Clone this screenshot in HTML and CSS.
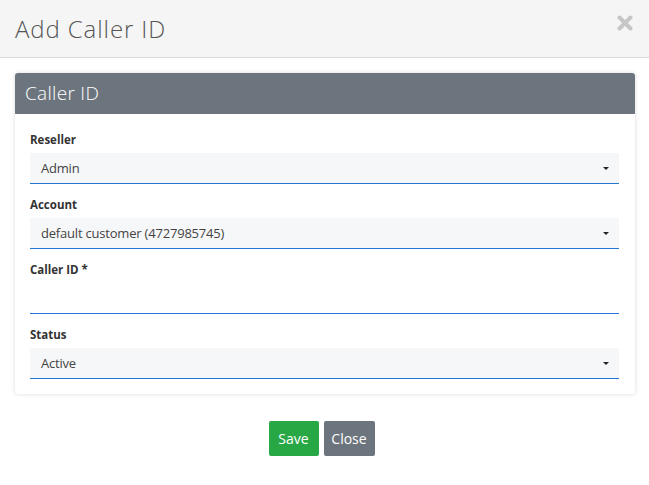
FILE: index.html
```html
<!DOCTYPE html>
<html>
<head>
<meta charset="utf-8">
<link rel="stylesheet" href="styles.css">
</head>
<body>
<div class="modal">
  <div class="modal-header">
    <h4 class="modal-title">Add Caller ID</h4>
    <svg class="close" width="16" height="16" viewBox="0 0 16 16"><path d="M2.5 2.5 L13.5 13.5 M13.5 2.5 L2.5 13.5" stroke="#c6c6c6" stroke-width="4" stroke-linecap="round"/></svg>
  </div>
  <div class="modal-body">
    <div class="card">
      <div class="card-header">Caller ID</div>
      <div class="card-body">
        <div class="field">
          <label class="label">Reseller</label>
          <div class="control select"><span>Admin</span><span class="caret"></span></div>
        </div>
        <div class="field">
          <label class="label">Account</label>
          <div class="control select"><span>default customer (4727985745)</span><span class="caret"></span></div>
        </div>
        <div class="field">
          <label class="label">Caller ID *</label>
          <div class="control input"></div>
        </div>
        <div class="field">
          <label class="label">Status</label>
          <div class="control select"><span>Active</span><span class="caret"></span></div>
        </div>
      </div>
    </div>
    <div class="actions">
      <button class="btn btn-save">Save</button>
      <button class="btn btn-close">Close</button>
    </div>
  </div>
</div>
</body>
</html>
```

FILE: styles.css
```css
html, body {
  margin: 0;
  padding: 0;
  background: #fff;
  font-family: "Open Sans", "Noto Sans", sans-serif;
}
.modal {
  width: 649px;
  height: 485px;
  background: #fff;
}
.modal-header {
  height: 58px;
  box-sizing: border-box;
  background: #f5f5f5;
  border-bottom: 1px solid #dcdcdc;
  display: flex;
  align-items: center;
  justify-content: space-between;
  padding: 0 16px 0 15px;
}
.modal-title {
  margin: 0;
  font-size: 24px;
  font-weight: 300;
  letter-spacing: 0.9px;
  color: #555;
  padding-bottom: 1px;
}
.close {
  display: block;
  margin-top: -12px;
}
.modal-body {
  padding: 15px 14px 0 15px;
}
.card {
  border-radius: 3px;
  box-shadow: 0 0 4px rgba(0,0,0,0.15);
  background: #fff;
}
.card-header {
  background: #6c757d;
  color: #fff;
  height: 41px;
  line-height: 41px;
  padding: 0 10px;
  font-size: 19px;
  font-weight: 300;
  letter-spacing: 0.3px;
  border-radius: 3px 3px 0 0;
}
.card-body {
  padding: 19px 16px 15px 15px;
}
.field + .field {
  margin-top: 14px;
}
.label {
  display: block;
  font-size: 11.5px;
  font-weight: 700;
  color: #333;
  height: 20px;
  line-height: 14px;
}
.control {
  height: 31px;
  box-sizing: border-box;
  border-bottom: 1px solid #2478d4;
  display: flex;
  align-items: center;
  justify-content: space-between;
  padding: 0 11px;
  font-size: 13px;
  letter-spacing: -0.2px;
  color: #444;
}
.select {
  background: #f6f7f9;
}
.input {
  background: #fff;
}
.caret {
  width: 0;
  height: 0;
  border-left: 3px solid transparent;
  border-right: 3px solid transparent;
  border-top: 3px solid #222;
  margin-right: -1px;
}
.actions {
  display: flex;
  justify-content: center;
  gap: 5px;
  margin-top: 27px;
  padding-right: 7px;
}
.btn {
  border: none;
  border-radius: 2px;
  color: #fff;
  font-family: inherit;
  font-size: 14px;
  height: 35px;
  padding: 0;
}
.btn-save {
  background: #28a745;
  width: 50px;
}
.btn-close {
  background: #6c757d;
  width: 51px;
}
```
